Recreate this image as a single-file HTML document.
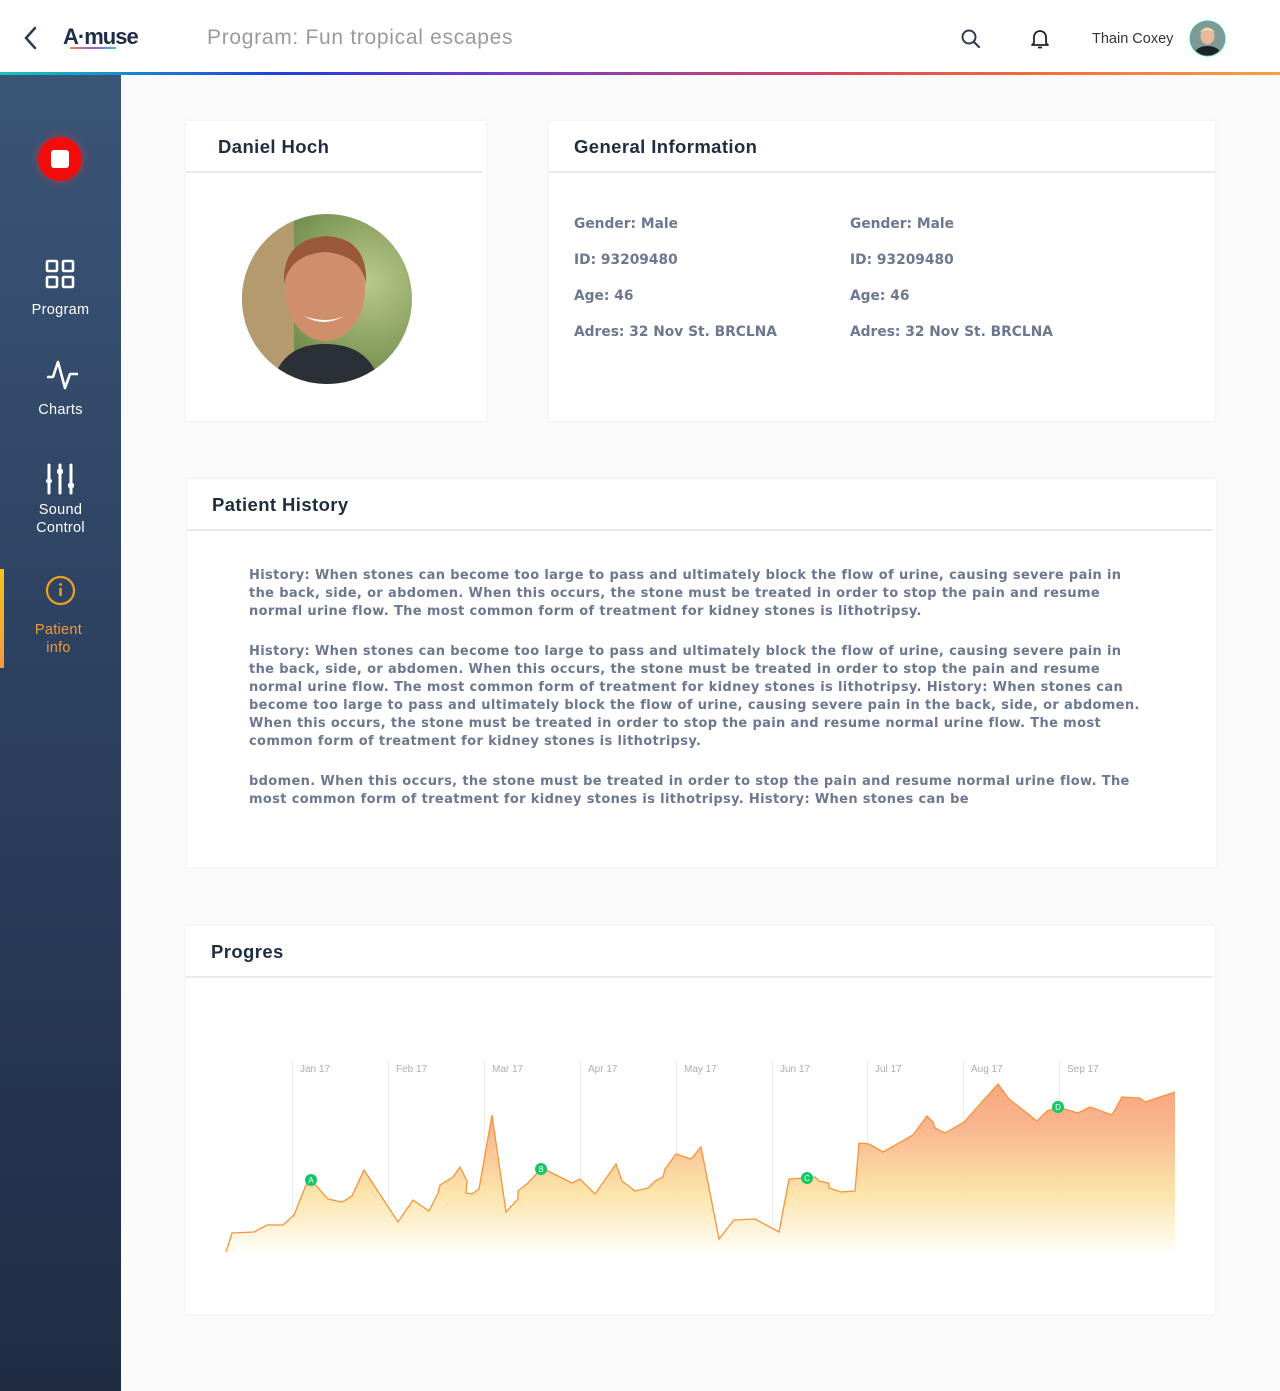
<!DOCTYPE html>
<html><head><meta charset="utf-8"><style>
*{margin:0;padding:0;box-sizing:border-box}
body{width:1280px;height:1391px;background:#fafafa;font-family:"Liberation Sans",sans-serif;position:relative;overflow:hidden}
.hdr{position:absolute;left:0;top:0;width:1280px;height:72px;background:#fff}
.grad{position:absolute;left:0;top:72px;width:1280px;height:3px;background:linear-gradient(90deg,#12c6c0 0%,#1f3fe0 22%,#7a3acb 40%,#d8455e 65%,#f06b3a 80%,#f7a040 100%)}
.side{position:absolute;left:0;top:75px;width:121px;height:1316px;background:linear-gradient(180deg,#3b5577 0%,#2b3f5e 50%,#1f2c44 100%)}
.nav{position:absolute;left:0;width:121px;text-align:center;color:#fff;font-size:14.5px;line-height:18px;letter-spacing:.3px}
.card{position:absolute;background:#fff;box-shadow:0 0 3px rgba(0,0,0,.08)}
.ch{height:52px;border-bottom:2px solid #e8eaee;font-weight:bold;font-size:18.5px;letter-spacing:.4px;color:#1e2d3f;line-height:52px}
.info{position:absolute;font-family:"DejaVu Sans",sans-serif;font-weight:bold;font-size:13.8px;color:#6b7890}
.hist{position:absolute;left:62px;font-family:"DejaVu Sans",sans-serif;font-weight:bold;font-size:13px;letter-spacing:.35px;color:#6b7890;line-height:18px;white-space:nowrap}
</style></head><body>
<div class="hdr">
<svg style="position:absolute;left:22px;top:26px" width="16" height="24"><path d="M13 2 L4 12 L13 22" stroke="#2c3b55" stroke-width="2.5" fill="none" stroke-linecap="round"/></svg>
<div style="position:absolute;left:63px;top:24px;font-weight:bold;font-size:22px;color:#1e2d45;letter-spacing:-1px">A·muse</div>
<div style="position:absolute;left:70px;top:47px;width:46px;height:2px;background:linear-gradient(90deg,#f08a4b,#8f5ad8,#3bc4c4)"></div>
<div style="position:absolute;left:207px;top:26px;font-size:21px;letter-spacing:.7px;color:#9a9a9a">Program: Fun tropical escapes</div>
<svg style="position:absolute;left:960px;top:28px" width="22" height="22"><circle cx="9" cy="9" r="6.5" stroke="#2c3b55" stroke-width="2" fill="none"/><path d="M14 14 L19 19" stroke="#2c3b55" stroke-width="2.2" stroke-linecap="round"/></svg>
<svg style="position:absolute;left:1030px;top:28px" width="20" height="22"><path d="M4 15 V9 a6 6 0 0 1 12 0 V15 L18 17 H2 Z" stroke="#222" stroke-width="1.8" fill="none" stroke-linejoin="round"/><path d="M8 19.5 h4" stroke="#222" stroke-width="1.8"/></svg>
<div style="position:absolute;left:1092px;top:31px;font-size:14.5px;color:#333">Thain Coxey</div>
<svg style="position:absolute;left:1189px;top:20px" width="37" height="37"><defs><clipPath id="av"><circle cx="18.5" cy="18.5" r="17"/></clipPath></defs><circle cx="18.5" cy="18.5" r="18" fill="#3bb8a8"/><g clip-path="url(#av)"><rect width="37" height="37" fill="#7d9a94"/><ellipse cx="18.5" cy="16" rx="7" ry="8.5" fill="#e8b99a"/><path d="M11 12 q7 -9 15 0 q-7 -3 -15 0z" fill="#e9d9b0"/><path d="M4 37 q2 -11 14.5 -11 q12.5 0 14.5 11z" fill="#1e2226"/></g></svg>
</div>
<div class="grad"></div>
<div class="side">
<div style="position:absolute;left:38px;top:62px;width:44px;height:44px;border-radius:50%;background:#f20c0c;box-shadow:0 0 10px rgba(255,60,60,.5)"></div>
<div style="position:absolute;left:51px;top:75px;width:18px;height:18px;border-radius:3px;background:#fff"></div>
<svg style="position:absolute;left:45px;top:184px" width="31" height="31"><g stroke="#fff" stroke-width="2.6" fill="none"><rect x="2" y="2" width="10" height="10" rx="1"/><rect x="18" y="2" width="10" height="10" rx="1"/><rect x="2" y="18" width="10" height="10" rx="1"/><rect x="18" y="18" width="10" height="10" rx="1"/></g></svg>
<div class="nav" style="top:226px">Program</div>
<svg style="position:absolute;left:46px;top:284px" width="34" height="32"><path d="M1 18 H7 L12 3 L19 29 L24 15 H32" stroke="#fff" stroke-width="2.6" fill="none" stroke-linejoin="round"/></svg>
<div class="nav" style="top:326px">Charts</div>
<svg style="position:absolute;left:44px;top:388px" width="34" height="32"><g stroke="#fff" stroke-width="3" stroke-linecap="round"><path d="M5 2V30M16 2V30M27 2V30"/></g><g fill="#fff"><rect x="2" y="16" width="6" height="4" rx="2"/><rect x="13" y="6" width="6" height="5" rx="2"/><rect x="24" y="20" width="6" height="5" rx="2"/></g></svg>
<div class="nav" style="top:426px">Sound<br>Control</div>
<div style="position:absolute;left:0;top:494px;width:4px;height:99px;background:linear-gradient(180deg,#f5c518,#f59a40)"></div>
<svg style="position:absolute;left:45px;top:500px" width="31" height="31"><circle cx="15.5" cy="15.5" r="13.5" stroke="#f0a020" stroke-width="2.2" fill="none"/><path d="M15.5 13v8" stroke="#f0a020" stroke-width="2.4"/><circle cx="15.5" cy="9.5" r="1.4" fill="#f0a020"/></svg>
<div class="nav" style="top:546px;color:#f39a35;left:-2px">Patient<br>info</div>
</div>

<div class="card" style="left:186px;top:121px;width:300px;height:300px">
<div class="ch" style="padding-left:32px;width:297px">Daniel Hoch</div>
<svg style="position:absolute;left:56px;top:93px" width="170" height="170"><defs><clipPath id="pc"><circle cx="85" cy="85" r="85"/></clipPath><radialGradient id="bg" cx=".75" cy=".4" r=".6"><stop offset="0" stop-color="#b9c98a"/><stop offset="1" stop-color="#6f8a4a"/></radialGradient></defs><g clip-path="url(#pc)"><rect width="170" height="170" fill="url(#bg)"/><rect x="0" y="0" width="52" height="170" fill="#b49a6c"/><ellipse cx="83" cy="75" rx="40" ry="52" fill="#d08f6c"/><path d="M42 70 q-2 -45 42 -48 q42 2 40 48 q-4 -28 -40 -32 q-36 2 -42 32z" fill="#9a5a3a"/><path d="M62 102 q20 12 40 0 q-18 8 -40 0z" fill="#fff"/><path d="M30 170 q10 -40 53 -40 q45 0 55 40z" fill="#2b2f36"/></g></svg>
</div>

<div class="card" style="left:549px;top:121px;width:666px;height:300px">
<div class="ch" style="padding-left:25px">General Information</div>
<div class="info" style="left:25px;top:85px;line-height:36px">Gender: Male<br>ID: 93209480<br>Age: 46<br>Adres: 32 Nov St. BRCLNA</div>
<div class="info" style="left:301px;top:85px;line-height:36px">Gender: Male<br>ID: 93209480<br>Age: 46<br>Adres: 32 Nov St. BRCLNA</div>
</div>

<div class="card" style="left:187px;top:479px;width:1029px;height:388px">
<div class="ch" style="padding-left:25px;width:1026px">Patient History</div>
<div class="hist" style="top:88px">History: When stones can become too large to pass and ultimately block the flow of urine, causing severe pain in<br>the back, side, or abdomen. When this occurs, the stone must be treated in order to stop the pain and resume<br>normal urine flow. The most common form of treatment for kidney stones is lithotripsy.</div>
<div class="hist" style="top:164px">History: When stones can become too large to pass and ultimately block the flow of urine, causing severe pain in<br>the back, side, or abdomen. When this occurs, the stone must be treated in order to stop the pain and resume<br>normal urine flow. The most common form of treatment for kidney stones is lithotripsy. History: When stones can<br>become too large to pass and ultimately block the flow of urine, causing severe pain in the back, side, or abdomen.<br>When this occurs, the stone must be treated in order to stop the pain and resume normal urine flow. The most<br>common form of treatment for kidney stones is lithotripsy.</div>
<div class="hist" style="top:294px">bdomen. When this occurs, the stone must be treated in order to stop the pain and resume normal urine flow. The<br>most common form of treatment for kidney stones is lithotripsy. History: When stones can be</div>
</div>

<div class="card" style="left:186px;top:926px;width:1029px;height:388px">
<div class="ch" style="padding-left:25px;width:1026px">Progres</div>
</div>
<svg style="position:absolute;left:0;top:0" width="1280" height="1391">
<defs><linearGradient id="fill" gradientUnits="userSpaceOnUse" x1="0" y1="1085" x2="0" y2="1252"><stop offset="0" stop-color="#f8a27a"/><stop offset=".25" stop-color="#f9b288"/><stop offset=".65" stop-color="#fbe3a6"/><stop offset="1" stop-color="#fffdf7"/></linearGradient></defs>
<g stroke="#ececec" stroke-width="1"><path d="M292.5 1060V1251M388.5 1060V1251M484.5 1060V1251M580.5 1060V1251M676.5 1060V1251M772.5 1060V1251M867.5 1060V1251M963.5 1060V1251M1059.5 1060V1251"/></g>
<g font-family="Liberation Sans" font-size="10" fill="#a7adb8"><text x="300" y="1072">Jan 17</text><text x="396" y="1072">Feb 17</text><text x="492" y="1072">Mar 17</text><text x="588" y="1072">Apr 17</text><text x="684" y="1072">May 17</text><text x="780" y="1072">Jun 17</text><text x="875" y="1072">Jul 17</text><text x="971" y="1072">Aug 17</text><text x="1067" y="1072">Sep 17</text></g>
<path d="M226 1252 L232 1233 L254 1232 L267 1225 L283 1225 L294 1215 L306 1185 L311 1180 L328 1199 L342 1202 L352 1196 L364 1170 L398 1222 L413 1200 L429 1211 L438 1193 L440 1185 L453 1177 L460 1167 L467 1181 L466 1193 L472 1194 L479 1189 L492 1115 L506 1212 L518 1199 L518 1191 L528 1183 L541 1169 L548 1171 L572 1183 L580 1179 L595 1194 L616 1164 L622 1181 L635 1191 L648 1188 L655 1181 L663 1177 L665 1169 L676 1154 L691 1159 L701 1147 L719 1239 L734 1220 L755 1219 L779 1232 L789 1179 L807 1178 L815 1177 L819 1181 L829 1183 L829 1188 L841 1192 L855 1191 L859 1143 L869 1144 L883 1152 L913 1135 L927 1116 L933 1122 L935 1128 L945 1133 L964 1122 L998 1084 L1009 1099 L1037 1121 L1047 1111 L1058 1107 L1078 1113 L1090 1107 L1112 1115 L1122 1097 L1140 1098 L1145 1102 L1175 1092 L1175 1252 Z" fill="url(#fill)" opacity=".95"/>
<path d="M226 1252 L232 1233 L254 1232 L267 1225 L283 1225 L294 1215 L306 1185 L311 1180 L328 1199 L342 1202 L352 1196 L364 1170 L398 1222 L413 1200 L429 1211 L438 1193 L440 1185 L453 1177 L460 1167 L467 1181 L466 1193 L472 1194 L479 1189 L492 1115 L506 1212 L518 1199 L518 1191 L528 1183 L541 1169 L548 1171 L572 1183 L580 1179 L595 1194 L616 1164 L622 1181 L635 1191 L648 1188 L655 1181 L663 1177 L665 1169 L676 1154 L691 1159 L701 1147 L719 1239 L734 1220 L755 1219 L779 1232 L789 1179 L807 1178 L815 1177 L819 1181 L829 1183 L829 1188 L841 1192 L855 1191 L859 1143 L869 1144 L883 1152 L913 1135 L927 1116 L933 1122 L935 1128 L945 1133 L964 1122 L998 1084 L1009 1099 L1037 1121 L1047 1111 L1058 1107 L1078 1113 L1090 1107 L1112 1115 L1122 1097 L1140 1098 L1145 1102 L1175 1092" fill="none" stroke="#f5953c" stroke-width="1.3"/>
<g fill="#12c865"><circle cx="311" cy="1180" r="6"/><circle cx="541" cy="1169" r="6"/><circle cx="807" cy="1178" r="6"/><circle cx="1058" cy="1107" r="6"/></g>
<g font-family="Liberation Sans" font-size="8" fill="#fff" text-anchor="middle"><text x="311" y="1183">A</text><text x="541" y="1172">B</text><text x="807" y="1181">C</text><text x="1058" y="1110">D</text></g>
</svg>
</body></html>
